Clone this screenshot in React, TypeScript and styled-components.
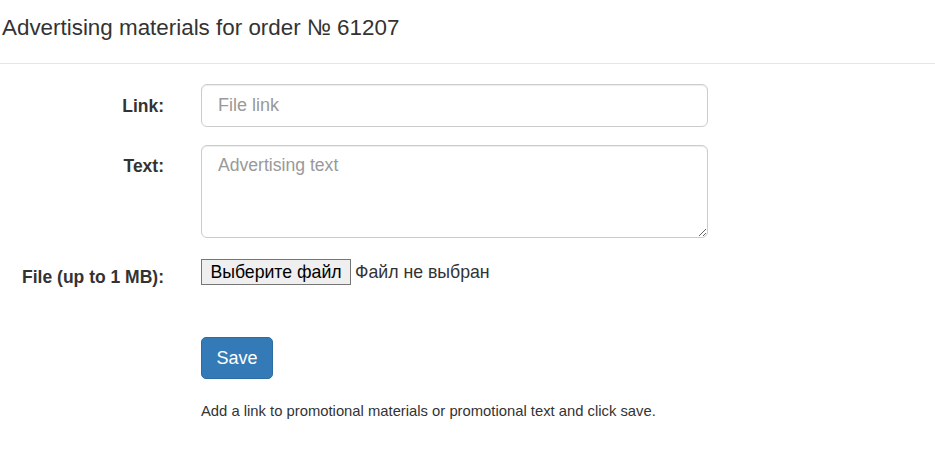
import styled, { createGlobalStyle } from "styled-components";

const GlobalStyle = createGlobalStyle`
  body {
    margin: 0;
    background: #fff;
    font-family: "Liberation Sans", Arial, sans-serif;
    color: #333;
  }
`;

const Header = styled.header`
  height: 64px;
  border-bottom: 1px solid #e5e5e5;
  box-sizing: border-box;
  padding: 14px 0 0 2px;

  h1 {
    margin: 0;
    font-size: 22.4px;
    font-weight: 400;
    line-height: 28px;
    color: #333;
  }
`;

const Form = styled.form`
  display: grid;
  grid-template-columns: 164px 507px;
  column-gap: 37px;
  padding-top: 20px;
`;

const Label = styled.label<{ $top: number }>`
  text-align: right;
  font-weight: 700;
  font-size: 17.5px;
  line-height: 20px;
  padding-top: ${(p) => p.$top}px;
`;

const Field = styled.div<{ $gap: number }>`
  margin-bottom: ${(p) => p.$gap}px;
`;

const inputBase = `
  width: 100%;
  box-sizing: border-box;
  border: 1px solid #ccc;
  border-radius: 6px;
  font-family: "Liberation Sans", Arial, sans-serif;
  font-size: 18px;
  color: #555;
  padding: 0 16px;
  box-shadow: inset 0 1px 1px rgba(0, 0, 0, 0.075);
  &::placeholder {
    color: #999;
  }
`;

const TextInput = styled.input`
  ${inputBase}
  height: 43px;
  display: block;
`;

const TextArea = styled.textarea`
  ${inputBase}
  display: block;
  height: 93px;
  padding-top: 9px;
  font-size: 17.6px;
  resize: vertical;
`;

const FilePicker = styled.div`
  display: flex;
  align-items: center;
  gap: 4px;
  font-size: 17.7px;
  color: #333;
`;

const FileButton = styled.button`
  width: 150px;
  height: 26px;
  box-sizing: border-box;
  background: #efefef;
  border: 1px solid #767676;
  border-radius: 0;
  font-family: "Liberation Sans", Arial, sans-serif;
  font-size: 17.7px;
  color: #000;
  padding: 0;
`;

const SaveButton = styled.button`
  width: 72px;
  height: 42px;
  background: #337ab7;
  border: 1px solid #2e6da4;
  border-radius: 5px;
  color: #fff;
  font-family: "Liberation Sans", Arial, sans-serif;
  font-size: 18px;
  padding: 0;
`;

const Help = styled.p`
  margin: 0;
  font-size: 14.8px;
  line-height: 20px;
  color: #333;
`;

export default function App() {
  return (
    <>
      <GlobalStyle />
      <Header>
        <h1>Advertising materials for order № 61207</h1>
      </Header>
      <Form onSubmit={(e) => e.preventDefault()}>
        <Label $top={12}>Link:</Label>
        <Field $gap={18}>
          <TextInput placeholder="File link" />
        </Field>

        <Label $top={11}>Text:</Label>
        <Field $gap={21}>
          <TextArea placeholder="Advertising text" />
        </Field>

        <Label $top={8}>File (up to 1 MB):</Label>
        <Field $gap={52}>
          <FilePicker>
            <FileButton type="button">Выберите файл</FileButton>
            <span>Файл не выбран</span>
          </FilePicker>
        </Field>

        <div />
        <Field $gap={22}>
          <SaveButton type="submit">Save</SaveButton>
        </Field>

        <div />
        <Help>
          Add a link to promotional materials or promotional text and click save.
        </Help>
      </Form>
    </>
  );
}
